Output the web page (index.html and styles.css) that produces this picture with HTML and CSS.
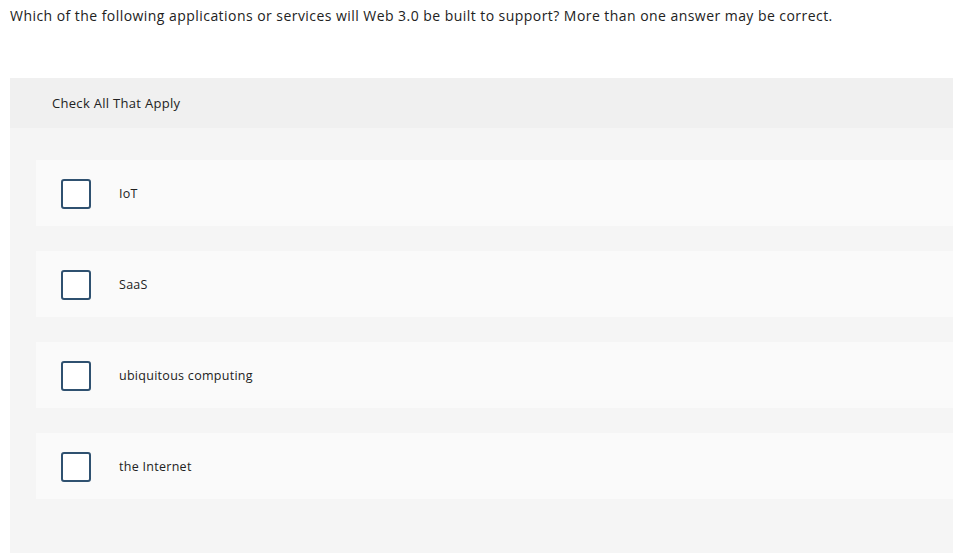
FILE: index.html
```html
<!DOCTYPE html>
<html>
<head>
<meta charset="utf-8">
<link rel="stylesheet" href="styles.css">
</head>
<body>
<p class="question">Which of the following applications or services will Web 3.0 be built to support? More than one answer may be correct.</p>
<div class="panel">
  <div class="panel-header">Check All That Apply</div>
  <div class="options">
    <label class="option"><span class="box"></span><span class="label">IoT</span></label>
    <label class="option"><span class="box"></span><span class="label">SaaS</span></label>
    <label class="option"><span class="box"></span><span class="label">ubiquitous computing</span></label>
    <label class="option"><span class="box"></span><span class="label">the Internet</span></label>
  </div>
</div>
</body>
</html>
```
FILE: styles.css
```css
html, body {
  margin: 0;
  padding: 0;
  background: #ffffff;
  overflow: hidden;
}
body {
  font-family: "Open Sans", "Liberation Sans", sans-serif;
  color: #222222;
  width: 953px;
  height: 555px;
}
.question {
  margin: 0;
  padding: 7px 0 0 10px;
  font-size: 14px;
  line-height: 18px;
  letter-spacing: 0.45px;
  white-space: nowrap;
}
.panel {
  margin: 53px 0 0 10px;
  width: 960px;
  background: #f5f5f5;
  height: 475px;
}
.panel-header {
  background: #f0f0f0;
  height: 50px;
  display: flex;
  align-items: center;
  padding-left: 42px;
  font-size: 13px;
  letter-spacing: 0.3px;
}
.options {
  padding: 32px 0 0 26px;
  display: flex;
  flex-direction: column;
  gap: 25px;
}
.option {
  display: flex;
  align-items: center;
  height: 66px;
  background: #fafafa;
  padding-left: 25px;
}
.box {
  width: 26px;
  height: 26px;
  border: 2px solid #2f5170;
  border-radius: 3px;
  background: #ffffff;
  margin-top: 2px;
  flex: none;
}
.label {
  margin-left: 28px;
  font-size: 12.5px;
  letter-spacing: 0.28px;
}
```
